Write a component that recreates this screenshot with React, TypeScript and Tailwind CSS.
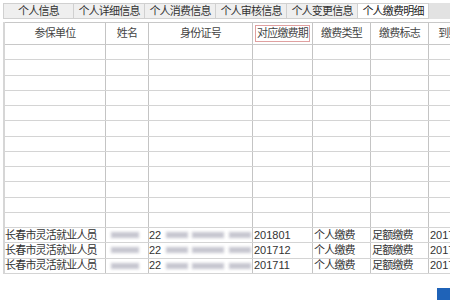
import React from 'react'

const tabs = ['个人信息', '个人详细信息', '个人消费信息', '个人审核信息', '个人变更信息', '个人缴费明细']

// 列宽，最后一列被窗口截断
const cols = ['w-[101px]', 'w-[43px]', 'w-[104px]', 'w-[60px]', 'w-[58px]', 'w-[58px]', 'w-[40px]']
const headers = ['参保单位', '姓名', '身份证号', '对应缴费期', '缴费类型', '缴费标志', '到账']
const periods = ['201801', '201712', '201711']

const cell = 'shrink-0 border-r border-[#c4c4c4] flex items-center whitespace-nowrap overflow-hidden'
const zh = 'tracking-[-0.8px]'

function Blur({ className }: { className: string }) {
  return <span className={'inline-block h-[6px] bg-[#b4b4c0] blur-[1.5px] opacity-75 ' + className} />
}

export default function App() {
  return (
    <div className="relative w-[450px] h-[300px] overflow-hidden bg-white text-[11px] text-[#333] font-['Liberation_Sans','Noto_Sans_CJK_SC',sans-serif]">
      {/* 标签栏 */}
      <div className="flex h-[19px] pt-[3px] pl-[3px]">
        {tabs.map((t, i) => {
          const active = i === tabs.length - 1
          return (
            <div
              key={t}
              className={
                'w-[71px] flex items-center justify-center whitespace-nowrap border border-[#d0d0d0] border-l-0 first:border-l leading-none ' +
                zh +
                (active ? ' bg-white text-[#222]' : ' bg-[#efefef] text-[#333]')
              }
            >
              {t}
            </div>
          )
        })}
        <div className="flex-1 bg-[#e2e2e2]" />
      </div>

      {/* 表格 */}
      <div className="mt-[3px] ml-[3px] border-l-[2px] border-[#d6d6d6]">
        <div className="flex h-[23px] border-t border-b border-[#c8c8c8] leading-none">
          {headers.map((h, i) => (
            <div key={h} className={cell + ' justify-center text-[#444] ' + zh + ' ' + cols[i]}>
              {i === 3 ? (
                <span className="border border-[#e0a0a0] px-[1px] h-[17px] flex items-center">{h}</span>
              ) : (
                h
              )}
            </div>
          ))}
        </div>
        {Array.from({ length: 12 }).map((_, r) => (
          <div key={r} className="flex h-[15.25px] border-b border-[#d4d4d4]">
            {cols.map((w, i) => (
              <div key={i} className={cell + ' ' + w} />
            ))}
          </div>
        ))}
        {periods.map((p) => (
          <div key={p} className="flex h-[15.25px] border-b border-[#d4d4d4] leading-none">
            <div className={cell + ' ' + zh + ' ' + cols[0]}>长春市灵活就业人员</div>
            <div className={cell + ' pl-[5px] ' + cols[1]}>
              <Blur className="w-[28px]" />
            </div>
            <div className={cell + ' ' + cols[2]}>
              <span>22</span>
              <Blur className="w-[22px] ml-[5px]" />
              <Blur className="w-[32px] ml-[4px]" />
              <Blur className="w-[22px] ml-[5px]" />
            </div>
            <div className={cell + ' pl-[1px] ' + cols[3]}>{p}</div>
            <div className={cell + ' pl-[1px] ' + zh + ' ' + cols[4]}>个人缴费</div>
            <div className={cell + ' pl-[1px] ' + zh + ' ' + cols[5]}>足额缴费</div>
            <div className={cell + ' pl-[1px] ' + cols[6]}>2017</div>
          </div>
        ))}
      </div>

      {/* 右下角按钮露出部分 */}
      <div className="absolute right-0 bottom-0 w-[13px] h-[12px] bg-[#1f63b8]" />
    </div>
  )
}
